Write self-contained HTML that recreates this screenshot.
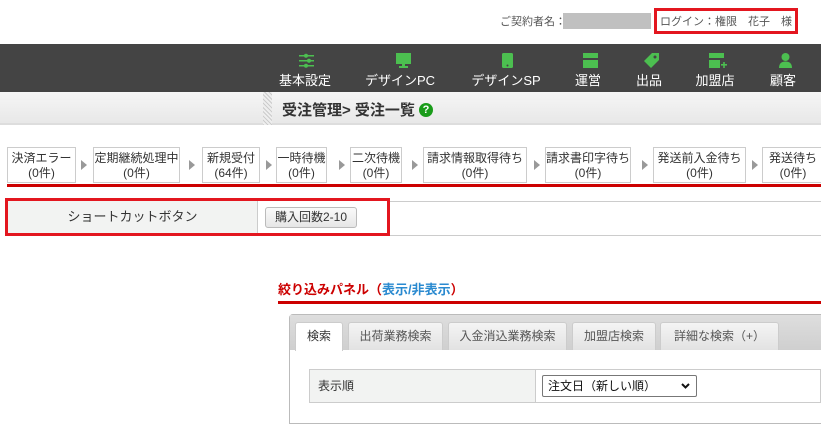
<!DOCTYPE html>
<html><head><meta charset="utf-8"><style>
*{margin:0;padding:0;box-sizing:border-box}
body{width:821px;height:416px;overflow:hidden;background:#fff;font-family:"Liberation Sans","Noto Sans CJK JP",sans-serif;position:relative;color:#333}
.a{position:absolute}
.nav{left:0;top:44px;width:821px;height:48px;background:#444}
.nl{color:#fff;font-size:13px;top:26px;white-space:nowrap;transform:translateX(-50%)}
.ic{top:9px}
.sb{top:147px;height:36px;border:1px solid #ccc;background:#fff;font-size:12px;line-height:15px;text-align:center;padding-top:3px;white-space:nowrap;overflow:hidden}
.arr{top:160px;width:0;height:0;border-top:5px solid transparent;border-bottom:5px solid transparent;border-left:6px solid #999}
.tab{top:322px;height:28px;border:1px solid #ccc;border-bottom:none;border-radius:3px 3px 0 0;background:linear-gradient(#f4f4f4,#e2e2e2);font-size:12px;color:#555;text-align:center;line-height:26px}
</style></head><body>
<div class="a" style="left:500px;top:13px;font-size:11px;color:#555">ご契約者名：</div>
<div class="a" style="left:563px;top:13px;width:88px;height:16px;background:#c0c0c0"></div>
<div class="a" style="left:654px;top:8px;width:144px;height:26px;border:3px solid #e3161f"></div>
<div class="a" style="left:660px;top:13px;font-size:11px;color:#555;white-space:nowrap">ログイン：権限　花子　様</div>
<div class="a nav">
 <svg class="a ic" style="left:299px" width="16" height="15" fill="#4cbf50"><rect x="0" y="2" width="15" height="1.5"/><rect x="0" y="7" width="15" height="1.5"/><rect x="0" y="12" width="15" height="1.5"/><circle cx="7" cy="2.7" r="2"/><circle cx="10" cy="7.7" r="2"/><circle cx="7" cy="12.7" r="2"/></svg>
 <svg class="a ic" style="left:396px" width="15" height="15" fill="#4cbf50"><rect x="0" y="0" width="15" height="11"/><rect x="6" y="11" width="3" height="2"/><rect x="3" y="13" width="9" height="2"/></svg>
 <svg class="a ic" style="left:502px" width="11" height="15" fill="#4cbf50"><rect x="0" y="0" width="11" height="15" rx="1.5"/><circle cx="5.5" cy="12.5" r="1" fill="#444"/></svg>
 <svg class="a ic" style="left:583px" width="15" height="15" fill="#4cbf50"><rect x="0" y="0" width="15" height="5"/><rect x="0" y="7" width="15" height="8"/></svg>
 <svg class="a ic" style="left:643px" width="16" height="15" fill="#4cbf50"><path d="M9 0h7v7l-8 8-7-7z"/><circle cx="12" cy="4" r="1.5" fill="#444"/></svg>
 <svg class="a ic" style="left:709px" width="18" height="16" fill="#4cbf50"><rect x="0" y="0" width="15" height="5"/><rect x="0" y="7" width="11" height="8"/><rect x="12" y="11" width="6" height="1.6"/><rect x="14.2" y="9" width="1.6" height="6"/></svg>
 <svg class="a ic" style="left:779px" width="13" height="15" fill="#4cbf50"><circle cx="6.5" cy="4" r="4"/><path d="M0 15c0-5 3-6.5 6.5-6.5S13 10 13 15z"/></svg>
 <div class="a nl" style="left:305px">基本設定</div>
 <div class="a nl" style="left:400px">デザインPC</div>
 <div class="a nl" style="left:506px">デザインSP</div>
 <div class="a nl" style="left:588px">運営</div>
 <div class="a nl" style="left:649px">出品</div>
 <div class="a nl" style="left:715px">加盟店</div>
 <div class="a nl" style="left:783px">顧客</div>
</div>
<div class="a" style="left:0;top:92px;width:821px;height:33px;background:linear-gradient(#f6f6f6,#e8e8e8);border-bottom:2px solid #ddd"></div>
<div class="a" style="left:263px;top:92px;width:9px;height:33px;background:repeating-linear-gradient(45deg,#ccc 0 1px,#eee 1px 3px)"></div>
<div class="a" style="left:282px;top:99px;font-size:15px;font-weight:bold;color:#333;white-space:nowrap;display:flex;align-items:center">受注管理&gt; 受注一覧<span style="display:inline-block;margin-left:4px;width:14px;height:14px;border-radius:50%;background:#1a9c1a;color:#fff;font-size:11px;text-align:center;line-height:14px">?</span></div>

<div class="a sb" style="left:7px;width:69px">決済エラー<br>(0件)</div><div class="a arr" style="left:81px"></div>
<div class="a sb" style="left:93px;width:87px">定期継続処理中<br>(0件)</div><div class="a arr" style="left:189px"></div>
<div class="a sb" style="left:202px;width:58px">新規受付<br>(64件)</div><div class="a arr" style="left:266px"></div>
<div class="a sb" style="left:276px;width:51px">一時待機<br>(0件)</div><div class="a arr" style="left:339px"></div>
<div class="a sb" style="left:350px;width:52px">二次待機<br>(0件)</div><div class="a arr" style="left:412px"></div>
<div class="a sb" style="left:423px;width:104px">請求情報取得待ち<br>(0件)</div><div class="a arr" style="left:534px"></div>
<div class="a sb" style="left:545px;width:86px">請求書印字待ち<br>(0件)</div><div class="a arr" style="left:642px"></div>
<div class="a sb" style="left:653px;width:93px">発送前入金待ち<br>(0件)</div><div class="a arr" style="left:752px"></div>
<div class="a sb" style="left:762px;width:62px">発送待ち<br>(0件)</div>
<div class="a" style="left:7px;top:184px;width:814px;height:3px;background:#c00"></div>

<div class="a" style="left:390px;top:201px;width:431px;height:1px;background:#ccc"></div>
<div class="a" style="left:390px;top:235px;width:431px;height:1px;background:#ccc"></div>
<div class="a" style="left:5px;top:198px;width:385px;height:38px;border:3px solid #e3161f;background:#fff"></div>
<div class="a" style="left:8px;top:201px;width:250px;height:32px;background:#f2f3f2;border-right:1px solid #ccc;font-size:13px;text-align:center;line-height:32px">ショートカットボタン</div>
<div class="a" style="left:265px;top:207px;width:92px;height:21px;border:1px solid #bbb;border-radius:3px;background:linear-gradient(#fafafa,#e6e6e6);font-size:12px;text-align:center;line-height:19px">購入回数2-10</div>

<div class="a" style="left:278px;top:279px;font-size:13px;font-weight:bold;color:#c00;white-space:nowrap">絞り込みパネル（<span style="color:#2a8ad0">表示/非表示</span>）</div>
<div class="a" style="left:278px;top:301px;width:543px;height:3px;background:#c00"></div>
<div class="a" style="left:289px;top:314px;width:540px;height:110px;border:1px solid #bbb;border-radius:4px 0 0 0"></div>
<div class="a" style="left:290px;top:315px;width:531px;height:35px;background:linear-gradient(#dedede,#cfcfcf)"></div>
<div class="tab a" style="left:295px;width:48px;height:29px;background:#fff;color:#333">検索</div>
<div class="tab a" style="left:348px;width:95px">出荷業務検索</div>
<div class="tab a" style="left:448px;width:119px">入金消込業務検索</div>
<div class="tab a" style="left:572px;width:84px">加盟店検索</div>
<div class="tab a" style="left:660px;width:119px">詳細な検索（+）</div>
<div class="a" style="left:309px;top:369px;width:512px;height:34px;border:1px solid #ccc"></div>
<div class="a" style="left:310px;top:370px;width:226px;height:32px;background:#f2f3f2;border-right:1px solid #ccc;font-size:12px;line-height:32px;padding-left:8px">表示順</div>
<div class="a" style="left:542px;top:375px;width:155px;height:22px;border:1px solid #777;border-radius:2px;background:#fff;font-size:12px;line-height:20px;padding-left:5px;color:#111">注文日（新しい順）
<svg class="a" style="right:6px;top:7px" width="9" height="6"><path d="M1 1l3.5 3.5L8 1" stroke="#111" stroke-width="2" fill="none"/></svg></div>
</body></html>
